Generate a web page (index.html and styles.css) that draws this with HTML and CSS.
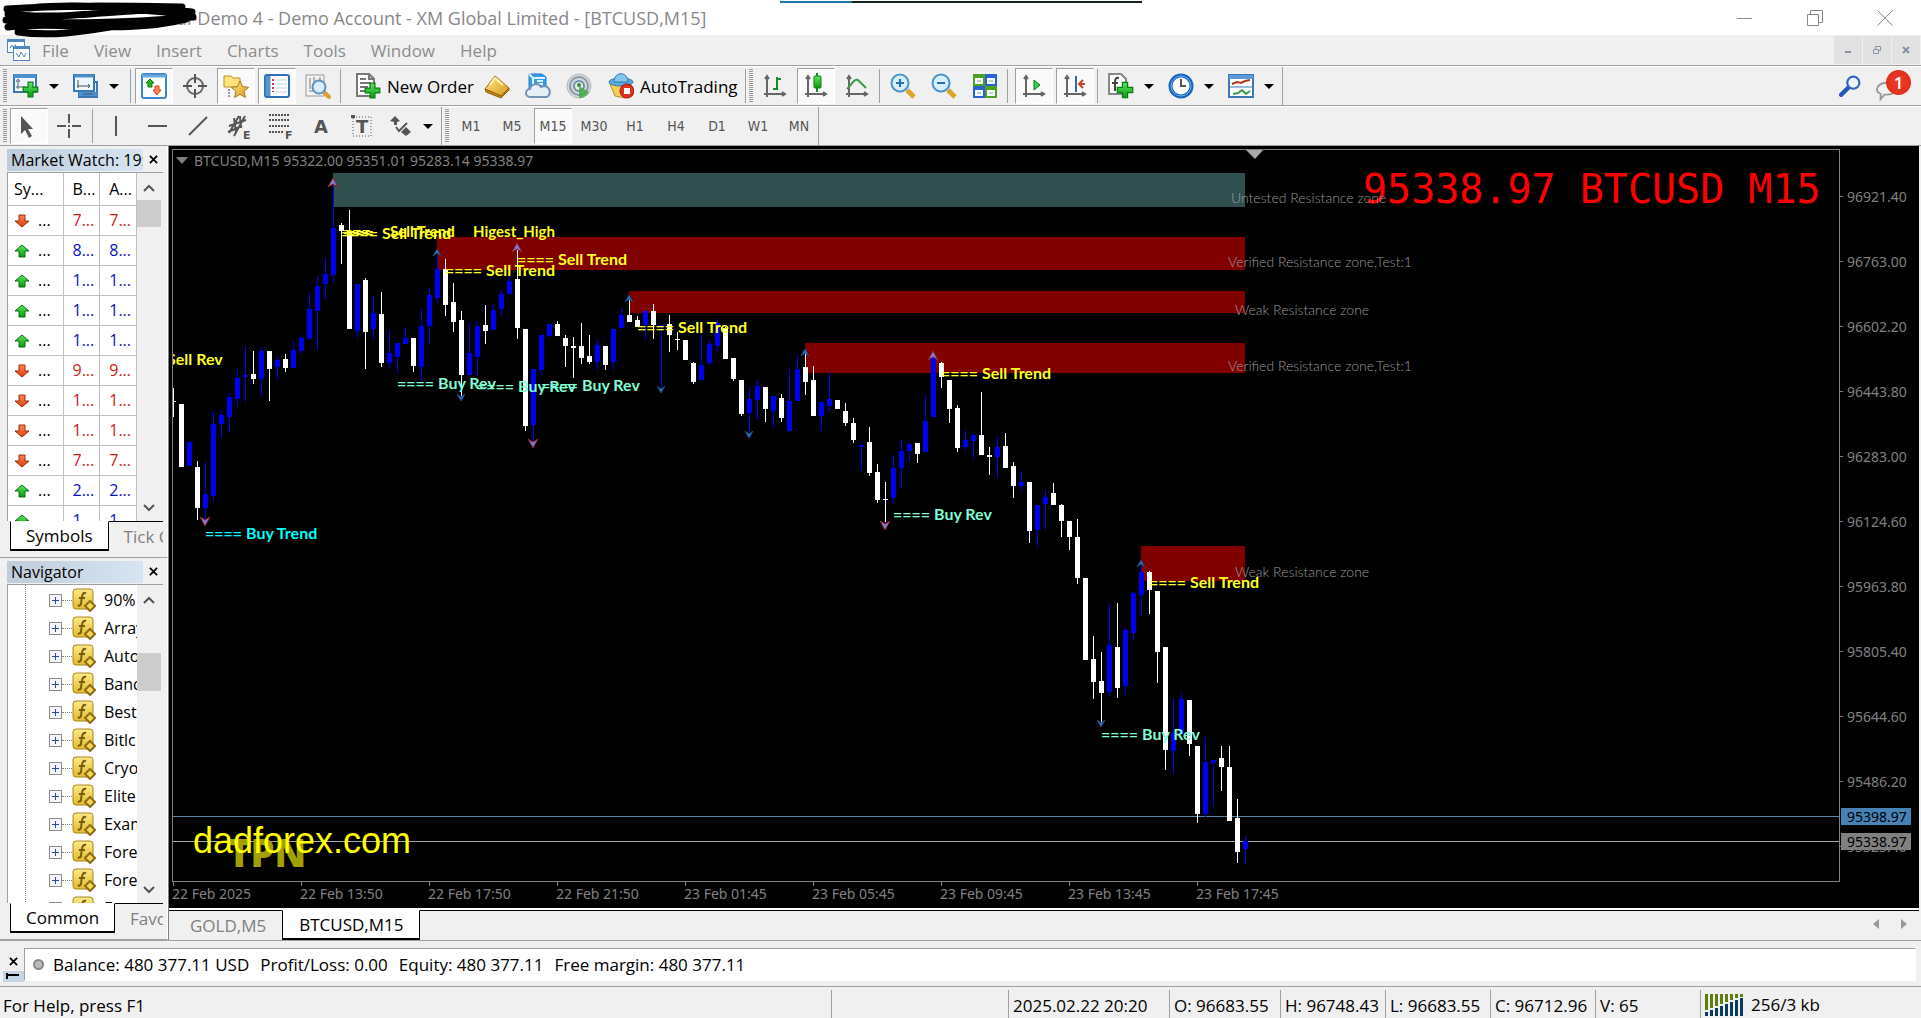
FILE: index.html
```html
<!DOCTYPE html>
<html lang="en">
<head>
  <meta charset="UTF-8" />
  <meta name="viewport" content="width=device-width, initial-scale=1.0"/>
  <title>Demo Account - XM Global Limited - [BTCUSD,M15]</title>
  <link rel="stylesheet" href="styles.css">
</head>
<body>

  <!-- Icon set -->
  <svg class="sprite" aria-hidden="true">
    <defs>
      <linearGradient id="g-green" x1="0" y1="0" x2="0" y2="1"><stop offset="0" stop-color="#5ee65e"/><stop offset="1" stop-color="#0a9a12"/></linearGradient>
      <linearGradient id="g-gold" x1="0" y1="0" x2="1" y2="1"><stop offset="0" stop-color="#ffe98a"/><stop offset="1" stop-color="#d9981c"/></linearGradient>
      <linearGradient id="g-fx" x1="0" y1="0" x2="0" y2="1"><stop offset="0" stop-color="#fbe98a"/><stop offset="1" stop-color="#e3bb2c"/></linearGradient>
      <linearGradient id="g-red" x1="0" y1="0" x2="0" y2="1"><stop offset="0" stop-color="#ff8a5a"/><stop offset="1" stop-color="#d93c0a"/></linearGradient>
    </defs>
    <symbol id="plus" viewBox="0 0 14 14"><path d="M5 1h4v4h4v4H9v4H5V9H1V5h4z" fill="url(#g-green)" stroke="#0b7d12"/></symbol>
    <symbol id="app" viewBox="0 0 24 24">
      <g fill="#fff" stroke="#4f86c6"><rect x="1.5" y="1.5" width="17" height="13"/><rect x="7.500" y="8.500" width="16" height="14"/></g>
      <path d="M1 3h18M7 10h17" stroke="#4f86c6" stroke-width="2"/>
      <path d="M4 10l2-3 2 3 2-4M10 15l3 4 2-5 3 5 2-4" fill="none" stroke="#4f86c6"/>
    </symbol>
    <symbol id="new-chart" viewBox="0 0 26 26">
      <rect x="1" y="2" width="22" height="17" fill="#eef5fc" stroke="#3c78b4" stroke-width="2"/><path d="M1 3h22" stroke="#4d90d0" stroke-width="4"/>
      <path d="M5 7v9M3 9l2-3 2 3M3 14h9" fill="none" stroke="#567"/>
      <use href="#plus" x="9" y="8" width="17" height="17"/>
    </symbol>
    <symbol id="profiles" viewBox="0 0 26 26">
      <rect x="6" y="9" width="18" height="15" fill="#dcebf8" stroke="#3c78b4" stroke-width="2"/><path d="M6 21h18" stroke="#4d90d0" stroke-width="4"/>
      <rect x="1" y="2" width="20" height="16" fill="#eef5fc" stroke="#3c78b4" stroke-width="2"/><path d="M1 3h20" stroke="#4d90d0" stroke-width="3"/>
      <path d="M5 7v8M4 13h13M15 11l2 2-2 2M10 21h10" fill="none" stroke="#456"/>
    </symbol>
    <symbol id="market" viewBox="0 0 26 26">
      <rect x="1" y="1" width="24" height="24" rx="2" fill="#fff" stroke="#3c86c8" stroke-width="2"/><path d="M1 3h24" stroke="#6aa9e0" stroke-width="3"/>
      <path d="M9 6l4 4h-2v4H7v-4H5z" fill="#22b322" stroke="#0b7d12"/><path d="M16 22l-4-5h2v-4h4v4h2z" fill="#ff8a5a" stroke="#d94010"/>
    </symbol>
    <symbol id="target" viewBox="0 0 26 26">
      <circle cx="13" cy="13" r="8" fill="none" stroke="#666" stroke-width="2"/><path d="M13 1v9M13 16v9M1 13h9M16 13h9" stroke="#555" stroke-width="2"/>
    </symbol>
    <symbol id="star-folder" viewBox="0 0 26 26">
      <path d="M1 3h7l2 2h7v9H1z" fill="#ffe27a" stroke="#b8902a"/><path d="M6 16v9" stroke="#333" stroke-dasharray="2 1"/>
      <path d="M17 8l2.600 5.600 6 .7-4.500 4 1.300 6.200-5.400-3.200-5.400 3.200 1.300-6.200-4.500-4 6-.7z" fill="url(#g-gold)" stroke="#a8791a"/>
    </symbol>
    <symbol id="data-window" viewBox="0 0 26 26">
      <rect x="1" y="2" width="24" height="22" rx="2" fill="#fff" stroke="#2f6fb5" stroke-width="2"/><path d="M4 3v20" stroke="#5b93cf" stroke-width="5"/>
      <path d="M9 6v13" stroke="#d33" stroke-width="2" stroke-dasharray="2 2"/><path d="M11 7h12M11 11h12M11 15h12M11 19h12" stroke="#b8cfe8"/>
    </symbol>
    <symbol id="tester" viewBox="0 0 26 26">
      <rect x="1" y="2" width="18" height="21" fill="#f3f3f3" stroke="#999"/><path d="M5 5v11M9 4v9M15 4v6M4 18h9" stroke="#777"/>
      <path d="M19 19l5 5" stroke="#d99f2b" stroke-width="4" stroke-linecap="round"/><circle cx="14" cy="14" r="6.500" fill="#d5ebfb" fill-opacity=".85" stroke="#5c94c4" stroke-width="2"/>
    </symbol>
    <symbol id="order" viewBox="0 0 26 26">
      <path d="M2 1h12l5 5v17H2z" fill="#fff" stroke="#777" stroke-width="2"/><path d="M14 1v5h5M5 6h6M5 10h11M5 14h8M5 18h5" fill="none" stroke="#777" stroke-width="2"/>
      <use href="#plus" x="9" y="9" width="17" height="17"/>
    </symbol>
    <symbol id="book" viewBox="0 0 26 26">
      <path d="M1 16L11 3l14 12-8 8z" fill="url(#g-gold)" stroke="#a06c10"/><path d="M1 16l1 3 15 6 8-8v-2l-8 8z" fill="#c98a14" stroke="#8c5d0c"/><path d="M6 12l5-7 8 7" fill="none" stroke="#fff3b0" stroke-width="2"/>
    </symbol>
    <symbol id="cloud" viewBox="0 0 26 26">
      <path d="M4 1h13l4 3v12H4z" fill="#2f9df0" stroke="#1f7fd0"/><path d="M4 1l4 4v11M8 5h12M12 8h6M12 11h6" stroke="#e4f4ff" fill="none" stroke-width="2"/>
      <path d="M5 24a4 4 0 0 1 0-8 6 6 0 0 1 11-2 5 5 0 0 1 6 10z" fill="#e6eef6" stroke="#7393b5" stroke-width="2"/>
    </symbol>
    <symbol id="signals" viewBox="0 0 26 26">
      <circle cx="13" cy="13" r="12" fill="#d6d9dc" stroke="#b4b8bb"/><circle cx="13" cy="13" r="9" fill="none" stroke="#8a9aa8" stroke-width="2"/><circle cx="13" cy="13" r="5" fill="#e8ecef" stroke="#6c8ea6" stroke-width="2"/>
      <circle cx="13" cy="12" r="2" fill="#2f8f3f"/><path d="M13 13v12c4 0 8-2 10-6z" fill="#3faa3f" fill-opacity=".8"/>
    </symbol>
    <symbol id="auto" viewBox="0 0 26 26">
      <path d="M2 11l5 12 10 2 7-12z" fill="#f4cf56" stroke="#b8892a"/><ellipse cx="13" cy="9" rx="12" ry="4" fill="#5faadb" stroke="#2d78ad"/><path d="M6 9c0-11 14-11 14 0z" fill="#86c5ee" stroke="#2d78ad"/>
      <circle cx="19" cy="18" r="7" fill="#e03020" stroke="#a51408"/><rect x="16" y="15" width="6" height="6" fill="#fff"/>
    </symbol>
    <symbol id="axes" viewBox="0 0 26 26"><path d="M5 4v20M2 21h20M3 6l2-3 2 3M20 19l3 2-3 2" fill="none" stroke="#666" stroke-width="2"/></symbol>
    <symbol id="bars" viewBox="0 0 26 26"><use href="#axes"/><path d="M15 4v13M11 16h4M15 6h4" stroke="#168a2a" stroke-width="2"/></symbol>
    <symbol id="candles" viewBox="0 0 26 26"><use href="#axes"/><path d="M14 0v19" stroke="#168a2a" stroke-width="2"/><rect x="11" y="3" width="7" height="12" rx="1" fill="url(#g-green)" stroke="#0b7d12"/></symbol>
    <symbol id="line" viewBox="0 0 26 26"><use href="#axes"/><path d="M3 16c5-5 8-12 12-8l7 7" fill="none" stroke="#3d9a4a" stroke-width="2"/></symbol>
    <symbol id="zoom-in" viewBox="0 0 26 26">
      <path d="M17 17l7 7" stroke="#d9a52b" stroke-width="5"/><circle cx="10" cy="10" r="8.500" fill="#d5effc" stroke="#4b93c9" stroke-width="2"/><path d="M6 10h8M10 6v8" stroke="#2b6ea8" stroke-width="2"/>
    </symbol>
    <symbol id="zoom-out" viewBox="0 0 26 26">
      <path d="M17 17l7 7" stroke="#d9a52b" stroke-width="5"/><circle cx="10" cy="10" r="8.500" fill="#d5effc" stroke="#4b93c9" stroke-width="2"/><path d="M6 10h8" stroke="#2b6ea8" stroke-width="2"/>
    </symbol>
    <symbol id="tiles" viewBox="0 0 26 26">
      <path d="M1 1h12v12H1zM13 13h12v12H13z" fill="#4ea022"/><path d="M13 1h12v12H13zM1 13h12v12H1z" fill="#2a62d0"/>
      <path d="M3 5h8v6H3zM15 5h8v6h-8zM3 17h8v6H3zM15 17h8v6h-8z" fill="#f5f9ff"/><path d="M5 8h4M17 8h4M5 20h4M17 20h4" stroke="#8aa"/>
    </symbol>
    <symbol id="scroll" viewBox="0 0 26 26"><use href="#axes"/><path d="M13 7v10l6-5z" fill="#3dcc4a" stroke="#0b7d12"/></symbol>
    <symbol id="shift" viewBox="0 0 26 26"><use href="#axes"/><path d="M14 3v16" stroke="#2b6ea8" stroke-width="2"/><path d="M23 11h-6M21 7l-4 4 4 4" fill="none" stroke="#c9431c" stroke-width="2"/></symbol>
    <symbol id="indicators" viewBox="0 0 26 26">
      <path d="M1 1h12l5 5v15H1z" fill="#fff" stroke="#888" stroke-width="2"/><path d="M11 5c-4-1-4 2-4 5v8M4 10h6" fill="none" stroke="#444" stroke-width="2"/>
      <use href="#plus" x="8" y="8" width="18" height="18"/>
    </symbol>
    <symbol id="clock" viewBox="0 0 26 26"><circle cx="13" cy="13" r="10.500" fill="#fff" stroke="#1765bd" stroke-width="4"/><circle cx="13" cy="13" r="10" fill="none" stroke="#66b2f2"/><path d="M13 6v7h5" fill="none" stroke="#555" stroke-width="2"/></symbol>
    <symbol id="template" viewBox="0 0 26 26">
      <rect x="1" y="2" width="24" height="22" fill="#fff" stroke="#3c78b4" stroke-width="2"/><path d="M1 4h24" stroke="#5b9ad8" stroke-width="4"/><path d="M2 14h22" stroke="#3c78b4"/>
      <path d="M4 11l5-2 4 1 4-2 5-1" fill="none" stroke="#b23a1c" stroke-width="2"/><path d="M5 21l5-1 4-3 4 4 4-3" fill="none" stroke="#3d9a4a" stroke-width="2"/>
    </symbol>
    <symbol id="cursor" viewBox="0 0 26 26"><path d="M5 3v18l4-4 4 8 3-2-4-7h5z" fill="#555"/></symbol>
    <symbol id="cross" viewBox="0 0 26 26"><path d="M12 1v9M12 16v9M0 13h9M15 13h9M11 13h2" stroke="#555" stroke-width="2"/></symbol>
    <symbol id="vline" viewBox="0 0 26 26"><path d="M13 3v20" stroke="#555" stroke-width="2"/></symbol>
    <symbol id="hline" viewBox="0 0 26 26"><path d="M4 13h19" stroke="#555" stroke-width="2"/></symbol>
    <symbol id="trend" viewBox="0 0 26 26"><path d="M4 22L22 4" stroke="#555" stroke-width="2"/></symbol>
    <symbol id="channel" viewBox="0 0 26 26"><path d="M3 20L13 3M8 23L19 3M3 13l17-6M2 19l14-6M8 5l2 14M14 3l1 12" stroke="#555" stroke-width="2"/><text x="17" y="26" class="glyph-sm">E</text></symbol>
    <symbol id="fibo" viewBox="0 0 26 26"><path d="M2 2h21M2 7h21M2 13h21M2 19h14" stroke="#555" stroke-width="2" stroke-dasharray="2 1"/><text x="18" y="26" class="glyph-sm">F</text></symbol>
    <symbol id="text-a" viewBox="0 0 26 26"><text x="6" y="20" class="glyph">A</text></symbol>
    <symbol id="text-t" viewBox="0 0 26 26"><rect x="4" y="4" width="18" height="19" fill="none" stroke="#555" stroke-dasharray="1 2"/><text x="7" y="20" class="glyph">T</text><path d="M2 2h4v3H2z" fill="#555"/></symbol>
    <symbol id="shapes" viewBox="0 0 26 26"><path d="M8 3l5 5-3 1v3H7V9L3 8zM19 23l-5-4 5-5 5 5z" fill="#555"/><path d="M9 14l3 4 8-8" fill="none" stroke="#555" stroke-width="2"/></symbol>
    <symbol id="search" viewBox="0 0 20 20"><path d="M2 18l8-8" stroke="#2456b8" stroke-width="4" stroke-linecap="round"/><circle cx="13" cy="7" r="5.500" fill="#eef4ff" stroke="#3464c0" stroke-width="2"/></symbol>
    <symbol id="chat" viewBox="0 0 24 20"><path d="M12 1c13 0 13 13 0 13H9l-4 5 0-6C-3 10 2 1 12 1z" fill="#f4f4f4" stroke="#999" stroke-width="2"/></symbol>
    <symbol id="up" viewBox="0 0 16 14"><path d="M8 1l7 6h-4v6H5V7H1z" fill="url(#g-green)" stroke="#0b6d12"/></symbol>
    <symbol id="down" viewBox="0 0 16 14"><path d="M8 13L1 7h4V1h6v6h4z" fill="url(#g-red)" stroke="#9c2b08"/></symbol>
    <symbol id="fx" viewBox="0 0 24 24">
      <rect x="1" y="1" width="20" height="20" rx="3" fill="url(#g-fx)" stroke="#a8861c"/>
      <path d="M14 5c-4-1-4 3-5 11-1 2-2 2-3 1M7 10h6" fill="none" stroke="#7a5c10" stroke-width="2"/><path d="M18 13l5 5-5 5-5-5z" fill="#f7d95a" stroke="#8c6c14" stroke-width="2"/>
    </symbol>
    <symbol id="expand" viewBox="0 0 13 13"><rect x=".5" y=".5" width="12" height="12" fill="#f4f6fb" stroke="#8c8c8c"/><path d="M3 6.500h7M6.500 3v7" stroke="#2b4a9c"/></symbol>
    <symbol id="chev-up" viewBox="0 0 12 8"><path d="M1 7l5-5 5 5" fill="none" stroke="#555" stroke-width="2"/></symbol>
    <symbol id="chev-down" viewBox="0 0 12 8"><path d="M1 1l5 5 5-5" fill="none" stroke="#555" stroke-width="2"/></symbol>
    <symbol id="close" viewBox="0 0 10 10"><path d="M1 1l8 8M9 1l-8 8" stroke="#000" stroke-width="2"/></symbol>
  </svg>

  <!-- Title bar -->
  <header class="titlebar">
    <div class="progress"></div>
    <svg class="scribble" width="204" height="40" viewBox="0 0 204 40" aria-hidden="true">
      <path d="M7 9C60 5 120 6 182 7M8 14C70 22 140 4 192 12M6 20C50 24 120 24 193 17M8 27C60 20 120 35 186 19M18 32C60 38 100 28 130 24M30 8C90 2 150 12 188 14" fill="none" stroke="#000" stroke-width="7" stroke-linecap="round"/>
    </svg>
    <span class="caption">bal-Demo 4 - Demo Account - XM Global Limited - [BTCUSD,M15]</span>
    <div class="window-buttons">
      <button aria-label="Minimize"><svg width="16" height="16"><path d="M0 8.500h15" stroke="#888"/></svg></button>
      <button aria-label="Restore"><svg width="16" height="16"><path d="M.5 4.500h11v11H.5zM3.500 4V.5h12v12H12" fill="none" stroke="#888"/></svg></button>
      <button aria-label="Close"><svg width="16" height="16"><path d="M.5.500l15 15M15.500.500l-15 15" stroke="#888"/></svg></button>
    </div>
  </header>

  <!-- Menu -->
  <nav class="menubar">
    <svg class="app-icon"><use href="#app"/></svg>
    <button>File</button><button>View</button><button>Insert</button><button>Charts</button><button>Tools</button><button>Window</button><button>Help</button>
    <div class="mdi-buttons">
      <button aria-label="Minimize chart"><svg width="8" height="8"><path d="M1 6h6" stroke="#8794a5" stroke-width="2"/></svg></button>
      <button aria-label="Restore chart"><svg width="8" height="8"><path d="M.5 3.500h5v4h-5zM2.500 3V.5h5v4H6" fill="none" stroke="#8794a5"/></svg></button>
      <button aria-label="Close chart"><svg width="8" height="8"><path d="M1 1l6 6M7 1L1 7" stroke="#8794a5" stroke-width="2"/></svg></button>
    </div>
  </nav>

  <!-- Standard and chart toolbars -->
  <div class="toolbar">
    <i class="grip"></i>
    <button class="tool-dd" aria-label="New chart"><svg><use href="#new-chart"/></svg></button>
    <button class="tool-dd" aria-label="Profiles"><svg><use href="#profiles"/></svg></button>
    <i class="sep"></i>
    <button class="tool on" aria-label="Market Watch"><svg><use href="#market"/></svg></button>
    <button class="tool" aria-label="Data Window"><svg><use href="#target"/></svg></button>
    <button class="tool on" aria-label="Navigator"><svg><use href="#star-folder"/></svg></button>
    <button class="tool on" aria-label="Terminal"><svg><use href="#data-window"/></svg></button>
    <button class="tool" aria-label="Strategy Tester"><svg><use href="#tester"/></svg></button>
    <i class="sep"></i>
    <button class="tool-text new-order"><svg><use href="#order"/></svg>New Order</button>
    <button class="tool" aria-label="MetaEditor"><svg><use href="#book"/></svg></button>
    <button class="tool" aria-label="VPS"><svg><use href="#cloud"/></svg></button>
    <button class="tool" aria-label="Signals"><svg><use href="#signals"/></svg></button>
    <button class="tool-text auto-trading"><svg><use href="#auto"/></svg>AutoTrading</button>
    <i class="sep"></i>
    <i class="grip"></i>
    <button class="tool" aria-label="Bar Chart"><svg><use href="#bars"/></svg></button>
    <button class="tool on" aria-label="Candlesticks"><svg><use href="#candles"/></svg></button>
    <button class="tool" aria-label="Line Chart"><svg><use href="#line"/></svg></button>
    <i class="sep"></i>
    <button class="tool" aria-label="Zoom In"><svg><use href="#zoom-in"/></svg></button>
    <button class="tool" aria-label="Zoom Out"><svg><use href="#zoom-out"/></svg></button>
    <button class="tool" aria-label="Tile Windows"><svg><use href="#tiles"/></svg></button>
    <i class="sep wide"></i>
    <button class="tool on" aria-label="Auto Scroll"><svg><use href="#scroll"/></svg></button>
    <button class="tool on" aria-label="Chart Shift"><svg><use href="#shift"/></svg></button>
    <i class="sep wide"></i>
    <button class="tool-dd" aria-label="Indicators"><svg><use href="#indicators"/></svg></button>
    <button class="tool-dd" aria-label="Periods"><svg><use href="#clock"/></svg></button>
    <button class="tool-dd" aria-label="Templates"><svg><use href="#template"/></svg></button>
    <i class="edge"></i>
    <div class="toolbar-right">
      <button aria-label="Search"><svg width="22" height="22"><use href="#search"/></svg></button>
      <button class="chat" aria-label="Messages"><svg width="24" height="20"><use href="#chat"/></svg><b class="badge">1</b></button>
    </div>
  </div>

  <!-- Drawing tools and timeframes -->
  <div class="toolbar">
    <i class="grip"></i>
    <button class="tool on" aria-label="Cursor"><svg><use href="#cursor"/></svg></button>
    <button class="tool" aria-label="Crosshair"><svg><use href="#cross"/></svg></button>
    <i class="sep"></i>
    <button class="tool" aria-label="Vertical Line"><svg><use href="#vline"/></svg></button>
    <button class="tool" aria-label="Horizontal Line"><svg><use href="#hline"/></svg></button>
    <button class="tool" aria-label="Trendline"><svg><use href="#trend"/></svg></button>
    <button class="tool" aria-label="Equidistant Channel"><svg><use href="#channel"/></svg></button>
    <button class="tool" aria-label="Fibonacci Retracement"><svg><use href="#fibo"/></svg></button>
    <button class="tool" aria-label="Text"><svg><use href="#text-a"/></svg></button>
    <button class="tool" aria-label="Text Label"><svg><use href="#text-t"/></svg></button>
    <button class="tool-dd" aria-label="Arrows"><svg><use href="#shapes"/></svg></button>
    <i class="edge"></i>
    <i class="grip"></i>
    <button class="tool">M1</button><button class="tool">M5</button><button class="tool on">M15</button><button class="tool">M30</button><button class="tool">H1</button><button class="tool">H4</button><button class="tool">D1</button><button class="tool">W1</button><button class="tool">MN</button>
    <i class="edge"></i>
  </div>

  <main class="workspace">
    <aside class="sidebar">
      <section class="panel market-watch">
        <div class="panel-title"><h2>Market Watch: 19:20:15</h2><button aria-label="Close"><svg width="9" height="9"><use href="#close"/></svg></button></div>
        <div class="panel-body">
          <div class="panel-scroll">
            <table>
              <thead><tr><th>Sy...</th><th>B...</th><th>A...</th></tr></thead>
              <tbody id="quotes"></tbody>
            </table>
          </div>
          <div class="scrollbar"><svg width="12" height="8"><use href="#chev-up"/></svg><i class="thumb"></i><svg width="12" height="8"><use href="#chev-down"/></svg></div>
        </div>
        <div class="panel-tabs"><button class="active">Symbols</button><button>Tick Chart</button></div>
      </section>

      <section class="panel navigator">
        <div class="panel-title"><h2>Navigator</h2><button aria-label="Close"><svg width="9" height="9"><use href="#close"/></svg></button></div>
        <div class="panel-body">
          <div class="panel-scroll"><ul id="tree"></ul></div>
          <div class="scrollbar"><svg width="12" height="8"><use href="#chev-up"/></svg><i class="thumb"></i><svg width="12" height="8"><use href="#chev-down"/></svg></div>
        </div>
        <div class="panel-tabs"><button class="active">Common</button><button>Favorites</button></div>
      </section>
    </aside>

    <section class="charts">
      <div class="chart">
        <svg class="plot" id="plot">
          <path d="M3 7h12l-6 7z" fill="#808080"/>
          <text x="21" y="16" class="info">BTCUSD,M15&#160;95322.00 95351.01 95283.14 95338.97</text>
          <line x1="0" x2="100%" y1="666.500" y2="666.500" stroke="#5b86a8"/>
          <line x1="0" x2="100%" y1="691.500" y2="691.500" stroke="#a9a9a9"/>

          <!-- Resistance zones -->
          <rect x="160" y="23" width="912" height="34" class="zone untested"/>
          <rect x="264" y="87" width="808" height="33" class="zone"/>
          <rect x="456" y="141" width="616" height="22" class="zone"/>
          <rect x="632" y="193" width="440" height="30" class="zone"/>
          <rect x="968" y="396" width="104" height="35" class="zone"/>

          <g id="candle-layer" shape-rendering="crispEdges"></g>
          <g id="arrow-layer"></g>
          <g id="signal-layer" class="signal"></g>

          <path d="M1073 0h17l-8 9z" fill="#a9a9a9"/>
          <text x="1190" y="53" class="big-price">95338.97 BTCUSD M15</text>
          <g class="zone-name">
            <text x="1058" y="53">Untested Resistance zone</text>
            <text x="1055" y="117">Verified Resistance zone,Test:1</text>
            <text x="1062" y="165">Weak Resistance zone</text>
            <text x="1055" y="221">Verified Resistance zone,Test:1</text>
            <text x="1062" y="427">Weak Resistance zone</text>
          </g>
          <text x="55" y="717" class="logo">TPN</text>
          <text x="20" y="703" class="site">dadforex.com</text>
        </svg>
        <div class="price-axis">
          <ol>
            <li>96921.40</li><li>96763.00</li><li>96602.20</li><li>96443.80</li><li>96283.00</li><li>96124.60</li>
            <li>95963.80</li><li>95805.40</li><li>95644.60</li><li>95486.20</li><li>95325.40</li>
          </ol>
          <span class="tag ask">95398.97</span>
          <span class="tag bid">95338.97</span>
        </div>
        <ol class="time-axis">
          <li>22 Feb 2025</li><li>22 Feb 13:50</li><li>22 Feb 17:50</li><li>22 Feb 21:50</li><li>23 Feb 01:45</li>
          <li>23 Feb 05:45</li><li>23 Feb 09:45</li><li>23 Feb 13:45</li><li>23 Feb 17:45</li>
        </ol>
      </div>
      <div class="chart-tabs">
        <button>GOLD,M5</button><button class="active">BTCUSD,M15</button>
        <svg width="34" height="10"><path d="M6 0v10L0 5zM28 0v10l6-5z" fill="#999"/></svg>
      </div>
    </section>
  </main>

  <!-- Terminal -->
  <section class="terminal">
    <div class="terminal-side"><button aria-label="Close"><svg width="9" height="9"><use href="#close"/></svg></button><svg class="dock" width="21" height="11"><path d="M4 2v6M4 4h12" stroke="#000" stroke-width="2"/></svg></div>
    <div class="account"><i class="dot"></i><span>Balance: 480 377.11 USD</span><span>Profit/Loss: 0.00</span><span>Equity: 480 377.11</span><span>Free margin: 480 377.11</span></div>
  </section>

  <footer class="statusbar">
    <span class="help">For Help, press F1</span>
    <span class="profile"></span>
    <span class="date">2025.02.22 20:20</span>
    <span class="open">O: 96683.55</span>
    <span class="ohlc">H: 96748.43</span>
    <span class="ohlc">L: 96683.55</span>
    <span class="ohlc">C: 96712.96</span>
    <span class="ohlc">V: 65</span>
    <span class="traffic"><svg id="traffic" width="38" height="22"></svg>256/3 kb</span>
  </footer>

  <script>
    // Market Watch rows: direction, first digit of bid and ask
    const quotes = ['d7', 'u8', 'u1', 'u1', 'u1', 'd9', 'd1', 'd1', 'd7', 'u2', 'u1'];
    document.getElementById('quotes').innerHTML = quotes.map(q => {
      const dir = q[0] === 'u' ? 'up' : 'down';
      return `<tr class="${dir}"><td><svg width="16" height="14"><use href="#${dir}"/></svg>...</td><td>${q[1]}...</td><td>${q[1]}...</td></tr>`;
    }).join('');

    const items = ['90% Index', 'Arrays', 'AutoTrend', 'Bands', 'Best', 'Bitlc', 'Cryoto', 'Elite', 'Example', 'Forex', 'Forex', 'Forex'];
    document.getElementById('tree').innerHTML = items.map(name =>
      `<li><svg width="13" height="13"><use href="#expand"/></svg><i></i><svg width="24" height="24"><use href="#fx"/></svg>${name}</li>`
    ).join('');

    // Candles: w = bear, b = bull; high, body top, body bottom, low
    const candles = `w 238 251 252 267|w 254 254 317 317|b 292 292 316 316|w 311 317 358 370|b 312 344 358 373|b 261 274 346 352
      |b 261 265 274 288|b 243 247 267 283|b 219 228 249 257|b 196 225 227 252|w 201 224 229 234|b 197 201 229 247
      |w 201 201 219 251|b 207 210 217 229|w 204 209 218 222|b 191 200 218 218|b 185 188 201 204|b 143 159 189 189
      |b 126 136 161 200|b 108 124 134 150|b 36 78 125 132|w 73 75 81 114|w 60 81 179 179|b 134 134 181 188
      |w 128 130 182 219|b 146 163 179 189|w 142 164 213 217|b 180 203 213 219|b 193 193 207 223|b 177 188 194 194
      |w 188 188 216 222|b 159 176 217 232|b 138 145 176 194|b 106 119 148 153|w 109 119 155 166|w 133 152 172 182
      |w 161 170 225 246|b 173 203 225 225|b 172 176 207 226|w 155 175 181 194|b 154 160 180 180|b 140 144 159 167
      |b 125 131 144 144|w 100 129 178 189|w 179 179 276 281|b 219 219 275 292|b 185 185 220 225|b 174 174 186 188
      |w 171 174 186 186|w 185 188 196 217|w 187 196 198 228|w 173 196 208 214|w 185 206 212 214|b 189 195 212 220
      |w 196 196 215 220|b 179 179 212 220|b 158 165 178 178|w 150 165 172 172|w 166 170 177 177|b 161 161 175 189
      |w 154 161 175 189|b 175 175 176 237|w 165 174 185 202|w 182 189 190 200|w 190 190 210 210|w 212 213 232 234
      |b 185 215 230 230|b 189 194 213 215|b 169 173 196 202|w 177 179 209 209|w 208 208 229 231|w 230 230 264 266
      |b 237 249 263 282|b 230 236 250 270|w 237 237 259 272|b 246 246 261 277|w 244 248 268 272|b 219 251 281 281
      |b 205 219 251 251|w 203 217 232 245|w 216 230 266 266|b 252 252 266 281|b 222 249 256 262|w 250 250 259 259
      |w 253 261 273 276|w 268 273 290 293|b 295 295 297 321|w 277 292 323 326|w 314 322 350 353|w 332 349 350 372
      |b 305 318 348 354|b 290 301 318 339|b 293 294 301 312|w 293 293 304 313|b 245 271 302 302|b 205 207 267 267
      |w 212 213 227 238|w 230 230 259 273|w 255 258 298 302|b 280 290 297 300|b 285 285 291 309|w 242 285 305 305
      |w 297 305 307 325|b 287 297 307 328|w 283 296 318 318|w 312 316 336 348|b 321 332 336 341|w 332 332 381 393
      |b 355 355 380 397|b 340 347 354 380|w 333 343 355 355|w 354 355 371 387|w 371 371 387 400|w 369 387 428 434
      |w 428 428 510 510|w 486 509 532 549|w 502 531 543 572|b 453 495 542 547|w 453 497 538 548|b 477 480 536 545
      |b 442 443 483 490|b 416 422 445 466|w 421 422 440 464|w 441 441 502 533|w 497 497 600 620|b 548 583 601 624
      |b 543 549 584 584|w 550 550 594 606|w 596 596 664 673|b 587 612 664 667|b 610 610 613 657|w 596 608 617 641
      |w 596 617 671 671|w 649 668 702 713|b 686 691 699 714`;
    const step = 8;
    document.getElementById('candle-layer').innerHTML = candles.split('|').map((row, i) => {
      const [kind, high, top, bottom, low] = row.trim().split(' ');
      const x = i * step;
      return `<g class="${kind}"><rect x="${x}" y="${high}" width="1" height="${low - high}"/>` +
        `<rect x="${x - 2}" y="${top}" width="5" height="${bottom - top}"/></g>`;
    }).join('');

    // Arrows: x, tip y, direction, strong
    const arrows = [
      [160, 28, 1, 1], [264, 99, 1, 0], [344, 93, 1, 1], [456, 145, 1, 0], [632, 199, 1, 0], [760, 201, 1, 1], [968, 410, 1, 0],
      [32, 376, -1, 1], [288, 251, -1, 0], [360, 298, -1, 1], [488, 243, -1, 0], [576, 288, -1, 0], [712, 380, -1, 1], [928, 577, -1, 0]
    ];
    document.getElementById('arrow-layer').innerHTML = arrows.map(([x, y, dir, strong]) => {
      const w = strong ? 5 : 4, h = (strong ? 9 : 7) * dir;
      return `<path d="M${x} ${y}l${w} ${h}l${-w} ${-3 * dir}l${-w} ${3 * dir}z" fill="${strong ? '#7f7fd0' : '#2f78c0'}" stroke="${strong ? '#902030' : '#164a80'}"/>`;
    }).join('');

    // Signal labels: x, baseline, text, class
    const signals = [
      [168, 89, '==== Sell Trend', 'sell'], [170, 87, '===', 'sell'], [173, 88, '===', 'sell'],
      [217, 87, 'Sell Trend', 'sell small'], [300, 87, 'Higest_High', 'sell small'],
      [272, 126, '==== Sell Trend', 'sell'], [344, 115, '==== Sell Trend', 'sell'], [464, 183, '==== Sell Trend', 'sell'],
      [768, 229, '==== Sell Trend', 'sell'], [976, 438, '==== Sell Trend', 'sell'], [-6, 215, 'Sell Rev', 'sell'],
      [32, 389, '==== Buy Trend', 'buy-trend'], [224, 239, '==== Buy Rev', 'buy'], [304, 242, '==== Buy Rev', 'buy'],
      [368, 241, '==== Buy Rev', 'buy'], [720, 370, '==== Buy Rev', 'buy'], [928, 590, '==== Buy Rev', 'buy']
    ];
    document.getElementById('signal-layer').innerHTML = signals.map(([x, y, label, cls]) =>
      `<text x="${x}" y="${y}" class="${cls}">${label}</text>`).join('');

    // Connection bars
    let bars = '';
    for (let i = 0; i < 8; i++) {
      bars += `<rect x="${i * 5}" y="0" width="3" height="${Math.max(3, 16 - i * 2)}" fill="#5f7d10"/>` +
        `<rect x="${i * 5}" y="${18 - i * 2}" width="3" height="${4 + i * 2}" fill="#0a3a5c"/>`;
    }
    document.getElementById('traffic').innerHTML = bars;
  </script>
</body>
</html>
```
FILE: styles.css
```css
* {
  box-sizing: border-box;
}

body {
  margin: 0;
  height: 100vh;
  display: flex;
  flex-direction: column;
  overflow: hidden;
  background: #f0f0f0;
  color: #000;
  font-family: "Open Sans", "Noto Sans", sans-serif;
  font-size: 17px;
}

button {
  padding: 0;
  border: none;
  background: none;
  color: inherit;
  font: inherit;
  white-space: nowrap;
}

ol, ul {
  margin: 0;
  padding: 0;
  list-style: none;
}

svg {
  flex-shrink: 0;
}

.sprite {
  position: absolute;
  width: 0;
  height: 0;
}

.glyph, .glyph-sm {
  font-family: "DejaVu Sans", sans-serif;
  font-weight: 700;
  font-size: 18px;
  fill: #555;
}

.glyph-sm {
  font-size: 11px;
}

/* Title bar */
.titlebar {
  position: relative;
  height: 35px;
  display: flex;
  align-items: center;
  padding-right: 1px;
  background: #fff;
  color: #888;
  font-size: 18px;
}

.scribble {
  position: absolute;
  left: 0;
  top: 0;
}

.caption {
  flex: 1;
  padding-left: 166px;
}

.progress {
  position: absolute;
  top: 1px;
  left: 50%;
  width: 362px;
  height: 2px;
  margin-left: -181px;
  background: linear-gradient(90deg, #1a78a8 20%, #14221f 20%);
}

.window-buttons {
  display: flex;
}

.window-buttons button {
  width: 70px;
  height: 35px;
  display: grid;
  place-items: center;
}

/* Menu */
.menubar {
  height: 31px;
  display: flex;
  align-items: center;
  gap: 25px;
  padding: 0 1px 0 6px;
  border-bottom: 1px solid #a0a0a0;
  color: #8c8c8c;
}

.app-icon {
  width: 24px;
  height: 24px;
  margin-right: -13px;
}

.mdi-buttons {
  display: flex;
  gap: 1px;
  margin-left: auto;
}

.mdi-buttons button {
  width: 28px;
  height: 28px;
  display: grid;
  place-items: center;
  background: #e2e2e2;
}

/* Toolbars */
.toolbar {
  height: 40px;
  display: flex;
  align-items: center;
  gap: 3px;
  border-top: 1px solid #fff;
  border-bottom: 1px solid #a0a0a0;
}

.grip {
  width: 4px;
  height: 34px;
  margin-left: 3px;
  background: repeating-linear-gradient(#999 0 1px, #f0f0f0 1px 2px);
}

.sep, .edge {
  width: 1px;
  height: 34px;
  margin-right: 1px;
  background: #a0a0a0;
}

.sep.wide {
  margin-right: 4px;
}

.edge {
  height: 38px;
  margin-left: -3px;
}

.sep + .grip, .edge + .grip {
  margin-left: -1px;
}

.tool {
  width: 38px;
  height: 36px;
  display: grid;
  place-items: center;
  border: 1px solid transparent;
  font-family: "DejaVu Sans Condensed", "Noto Sans", sans-serif;
  font-size: 14px;
  color: #555;
}

.tool.on {
  background: #fafafa;
  border-color: #a0a0a0 #fff #fff #a0a0a0;
}

.toolbar svg {
  width: 26px;
  height: 26px;
}

.tool-dd {
  width: 57px;
  height: 36px;
  display: flex;
  align-items: center;
  gap: 10px;
  padding-left: 3px;
}

.tool-dd::after {
  content: "";
  border: 5px solid transparent;
  border-top-color: #000;
  border-bottom: none;
}

.tool-text {
  display: flex;
  align-items: center;
  gap: 6px;
}

.new-order {
  width: 130px;
  padding-left: 10px;
}

.auto-trading {
  width: 141px;
  padding-left: 7px;
}

.toolbar-right {
  display: flex;
  align-items: center;
  gap: 15px;
  margin-left: auto;
  padding-right: 23px;
}

.toolbar-right svg {
  width: 22px;
  height: 22px;
  display: block;
}

.chat {
  position: relative;
  padding-top: 10px;
}

.badge {
  position: absolute;
  left: 10px;
  top: 0;
  width: 25px;
  height: 25px;
  border-radius: 50%;
  background: radial-gradient(#f03c28, #d82c18);
  color: #fff;
  font-size: 17px;
  font-weight: 600;
  line-height: 25px;
  text-align: center;
}

/* Workspace */
.workspace {
  flex: 1;
  min-height: 0;
  display: flex;
}

.sidebar {
  width: 168px;
  display: flex;
  flex-direction: column;
}

.panel {
  display: flex;
  flex-direction: column;
  padding: 1px 4px 6px 7px;
  border-bottom: 1px solid #a0a0a0;
  border-right: 1px solid #fff;
  min-height: 0;
}

.market-watch {
  flex: 413;
}

.navigator {
  flex: 382;
}

.panel-title {
  height: 25px;
  display: flex;
  align-items: center;
}

.panel-title h2 {
  flex: 1;
  min-width: 0;
  margin: 0;
  padding-left: 4px;
  overflow: hidden;
  white-space: nowrap;
  background: linear-gradient(90deg, #bfcddb, #d7e4f2);
  font-size: 16px;
  font-weight: 400;
  line-height: 22px;
}

.panel-title button {
  width: 20px;
  height: 21px;
  display: grid;
  place-items: center;
}

.panel-body {
  flex: 1;
  min-height: 0;
  display: flex;
  border: 1px solid #a0a0a0;
  border-width: 1px 0 0 1px;
  background: #fff;
}

.panel-scroll {
  flex: 1;
  min-width: 0;
  overflow: hidden;
}

.scrollbar {
  width: 26px;
  display: flex;
  flex-direction: column;
  align-items: center;
  justify-content: space-between;
  padding: 11px 2px 9px 0;
  background: #f0f0f0;
}

.thumb {
  width: 24px;
  height: 27px;
  margin: 8px 0 auto;
  background: #cdcdcd;
}

.navigator .thumb {
  height: 38px;
  margin-top: 49px;
}

table {
  width: 100%;
  table-layout: fixed;
  border-collapse: collapse;
  font-size: 16px;
}

th, td {
  height: 30px;
  padding: 0 0 0 9px;
  border-right: 1px solid #c0c0c0;
  border-bottom: 1px solid #c0c0c0;
  font-weight: 400;
  text-align: left;
  line-height: 28px;
  white-space: nowrap;
}

th {
  height: 32px;
}

th:first-child, td:first-child {
  width: 55px;
  padding-left: 6px;
}

td svg {
  margin-right: 8px;
  vertical-align: -2px;
}

.up td + td {
  color: #1010c0;
}

.down td + td {
  color: #d01818;
}

.panel-tabs {
  height: 30px;
  display: flex;
  padding-left: 3px;
  overflow: hidden;
}

.panel-tabs button {
  flex-shrink: 0;
  padding: 0 15px;
  border-top: 1px solid #000;
  color: #808080;
}

.panel-tabs .active, .chart-tabs .active {
  border: 1px solid #000;
  border-top-color: #fff;
  border-bottom-width: 2px;
  background: #fff;
  color: #000;
}

#tree {
  margin-left: 17px;
  padding-top: 1px;
  border-left: 1px dotted #808080;
}

#tree li {
  height: 28px;
  display: flex;
  align-items: center;
  margin-left: 23px;
  overflow: hidden;
  white-space: nowrap;
  font-size: 16px;
}

#tree i {
  flex: 0 0 10px;
  border-top: 1px dotted #808080;
}

#tree li svg:last-of-type {
  margin-right: 8px;
}

/* Chart */
.charts {
  flex: 1;
  min-width: 0;
  display: flex;
  flex-direction: column;
  padding-right: 2px;
  border-left: 1px solid #808080;
}

.chart {
  flex: 1;
  min-height: 0;
  display: grid;
  grid-template-columns: 1fr 79px;
  grid-template-rows: 1fr 26px;
  padding: 3px 0 0 3px;
  background: #000;
  color: #808080;
  font-family: "Noto Sans", "Open Sans", sans-serif;
  font-size: 14px;
}

.plot {
  width: 100%;
  height: 100%;
  min-height: 0;
  border: 1px solid #808080;
  overflow: hidden;
}

.info {
  fill: #808080;
}

.zone {
  fill: #800000;
}

.zone.untested {
  fill: #2f4f4f;
}

.w {
  fill: #fff;
}

.b {
  fill: #0000f0;
}

.signal {
  font-family: Lato, sans-serif;
  font-size: 16px;
  font-weight: 700;
}

.sell {
  fill: #ffff20;
}

.small {
  font-size: 15px;
}

.buy {
  fill: #7fffd4;
}

.buy-trend {
  fill: #00ffff;
}

.zone-name {
  fill: #999;
  font-family: Lato, sans-serif;
  font-size: 14px;
  font-weight: 300;
}

.big-price {
  fill: #f00;
  font-family: "DejaVu Sans Mono", monospace;
  font-size: 40px;
}

.logo {
  fill: #a0a000;
  font-family: "Liberation Sans Narrow", "Open Sans", sans-serif;
  font-size: 38px;
  font-weight: 800;
}

.site {
  fill: #ff0;
  font-family: "Liberation Sans", Arial, sans-serif;
  font-size: 36px;
}

.price-axis {
  position: relative;
  overflow: hidden;
  padding-top: 15px;
}

.price-axis li {
  display: flex;
  align-items: center;
  gap: 4px;
  height: 65px;
}

.price-axis li::before {
  content: "";
  width: 3px;
  border-top: 1px solid #808080;
}

.tag {
  position: absolute;
  left: 1px;
  width: 70px;
  padding-left: 6px;
  color: #000;
  line-height: 17px;
}

.ask {
  top: 659px;
  background: #4682b4;
}

.bid {
  top: 684px;
  background: #808080;
}

.time-axis {
  grid-column: 1 / -1;
  display: flex;
  overflow: hidden;
}

.time-axis li {
  position: relative;
  flex: 0 0 128px;
  line-height: 24px;
}

.time-axis li::before {
  content: "";
  position: absolute;
  left: 1px;
  height: 4px;
  border-left: 1px solid #808080;
}

.chart-tabs {
  height: 32px;
  display: flex;
  align-items: stretch;
  border-top: 2px solid #fff;
  background: linear-gradient(#000 1px, transparent 1px);
  color: #808080;
}

.chart-tabs button {
  padding: 0 16px 0 21px;
}

.chart-tabs .active {
  padding: 0 16px;
}

.chart-tabs svg {
  margin: 9px 12px 0 auto;
}

/* Terminal */
.terminal {
  height: 47px;
  display: flex;
  padding: 7px 5px 5px 2px;
  border-top: 1px solid #a0a0a0;
  border-bottom: 1px solid #a0a0a0;
}

.terminal-side {
  width: 22px;
  display: flex;
  flex-direction: column;
  align-items: center;
  justify-content: space-between;
}

.dock {
  background: #c5d5e6;
}

.account {
  flex: 1;
  display: flex;
  align-items: center;
  padding-left: 8px;
  gap: 11px;
  border: 1px solid #a0a0a0;
  border-right-color: #fff;
  border-bottom-color: #fff;
  background: #fff;
  white-space: nowrap;
}

.dot {
  width: 11px;
  height: 11px;
  margin-right: -2px;
  border: 2px solid #888;
  border-radius: 50%;
  background: #bbb;
}

/* Status bar */
.statusbar {
  height: 31px;
  display: flex;
  align-items: stretch;
  padding-top: 3px;
  white-space: nowrap;
}

.statusbar span {
  padding: 2px 0 0 4px;
  border-left: 1px solid #a0a0a0;
  line-height: 28px;
}

.statusbar .help {
  flex: 1;
  padding-left: 3px;
  border-left: none;
}

.statusbar .profile {
  width: 177px;
}

.statusbar .date {
  width: 161px;
}

.statusbar .open {
  width: 111px;
}

.statusbar .ohlc {
  width: 105px;
}

.statusbar .traffic {
  width: 221px;
  display: flex;
  align-items: center;
  gap: 8px;
}
```
